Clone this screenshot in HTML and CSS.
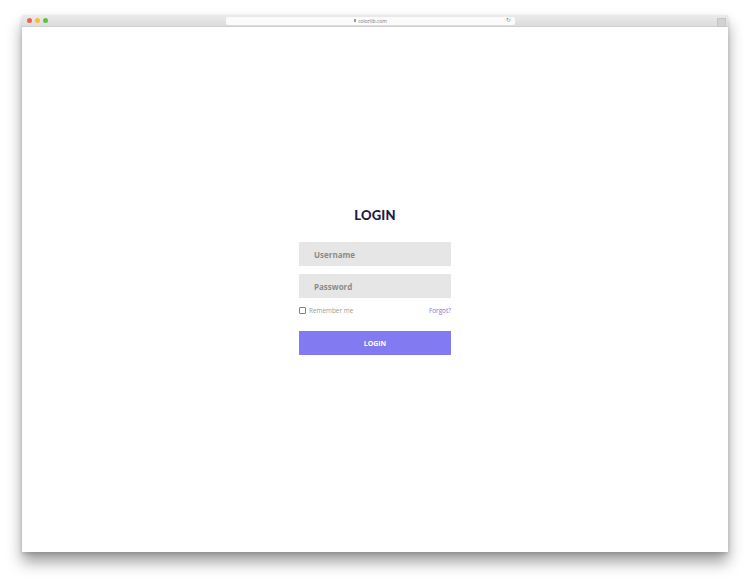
FILE: index.html
```html
<!DOCTYPE html>
<html>
<head>
<meta charset="utf-8">
<link rel="stylesheet" href="styles.css">
</head>
<body>
<div class="stage">
  <div class="window">
    <div class="titlebar">
      <div class="lights">
        <span class="light red"></span>
        <span class="light yellow"></span>
        <span class="light green"></span>
      </div>
      <div class="address">
        <span class="url"><span class="lock"></span>colorlib.com</span>
        <span class="reload">&#8635;</span>
      </div>
      <span class="tabbtn"></span>
    </div>
    <div class="content">
      <form class="login">
        <h1 class="title">LOGIN</h1>
        <div class="field">Username</div>
        <div class="field">Password</div>
        <div class="options">
          <label class="remember"><span class="box"></span>Remember me</label>
          <span class="forgot">Forgot?</span>
        </div>
        <div class="button">LOGIN</div>
      </form>
    </div>
  </div>
</div>
</body>
</html>
```
FILE: styles.css
```css
html, body {
  margin: 0;
  padding: 0;
  background: #ffffff;
  font-family: "Open Sans", "Liberation Sans", sans-serif;
}
.stage {
  width: 750px;
  height: 583px;
  padding: 15px 0 0 22px;
  box-sizing: border-box;
}
.window {
  width: 706px;
  height: 537px;
  background: #fff;
  box-shadow: 0 10px 14px rgba(0,0,0,0.38), 0 2px 4px rgba(0,0,0,0.15);
  display: flex;
  flex-direction: column;
}
.titlebar {
  height: 12px;
  background: linear-gradient(#ebebeb, #dcdcdc);
  border-bottom: 1px solid #cfcfcf;
  display: flex;
  align-items: center;
  padding: 0 0 0 5px;
  box-sizing: border-box;
}
.lights {
  display: flex;
  gap: 3px;
  width: 199px;
}
.light {
  width: 5px;
  height: 5px;
  border-radius: 50%;
}
.red { background: #f0605a; }
.yellow { background: #f4be3f; }
.green { background: #5cc246; }
.address {
  width: 289px;
  height: 8px;
  background: #fbfbfb;
  border-radius: 2px;
  display: flex;
  align-items: center;
  justify-content: center;
  position: relative;
}
.url {
  font-size: 5px;
  color: #777;
  display: flex;
  align-items: center;
  gap: 2px;
}
.lock {
  width: 2px;
  height: 3px;
  background: #999;
}
.reload {
  position: absolute;
  right: 4px;
  top: -1px;
  font-size: 6px;
  color: #888;
}
.tabbtn {
  margin-left: auto;
  margin-right: 2px;
  width: 7px;
  height: 7px;
  background: #d2d2d2;
  border: 1px solid #c6c6c6;
  margin-top: 3px;
}
.content {
  flex: 1;
  display: flex;
  justify-content: center;
}
.login {
  width: 152px;
  margin-top: 180px;
  display: flex;
  flex-direction: column;
}
.title {
  margin: 0 0 19px;
  text-align: center;
  font-family: "Lato", "Open Sans", sans-serif;
  font-size: 13px;
  line-height: 16px;
  font-weight: 900;
  color: #1d1c48;
  letter-spacing: 0.2px;
}
.field {
  height: 24px;
  background: #e6e6e6;
  margin-bottom: 8px;
  font-size: 8px;
  font-weight: 700;
  color: #8b8b8b;
  padding-left: 15px;
  display: flex;
  align-items: center;
}
.options {
  display: flex;
  justify-content: space-between;
  align-items: center;
  margin-top: -1px;
  height: 10px;
  font-size: 6.4px;
}
.remember {
  display: flex;
  align-items: center;
  gap: 3px;
  color: #9a9a9a;
}
.box {
  width: 5px;
  height: 5px;
  border: 1px solid #7b75d6;
  border-radius: 1px;
}
.forgot {
  color: #7c74dc;
}
.button {
  margin-top: 16px;
  height: 24px;
  background: #817af1;
  color: #fff;
  font-size: 7px;
  font-weight: 700;
  display: flex;
  align-items: center;
  justify-content: center;
}
```
